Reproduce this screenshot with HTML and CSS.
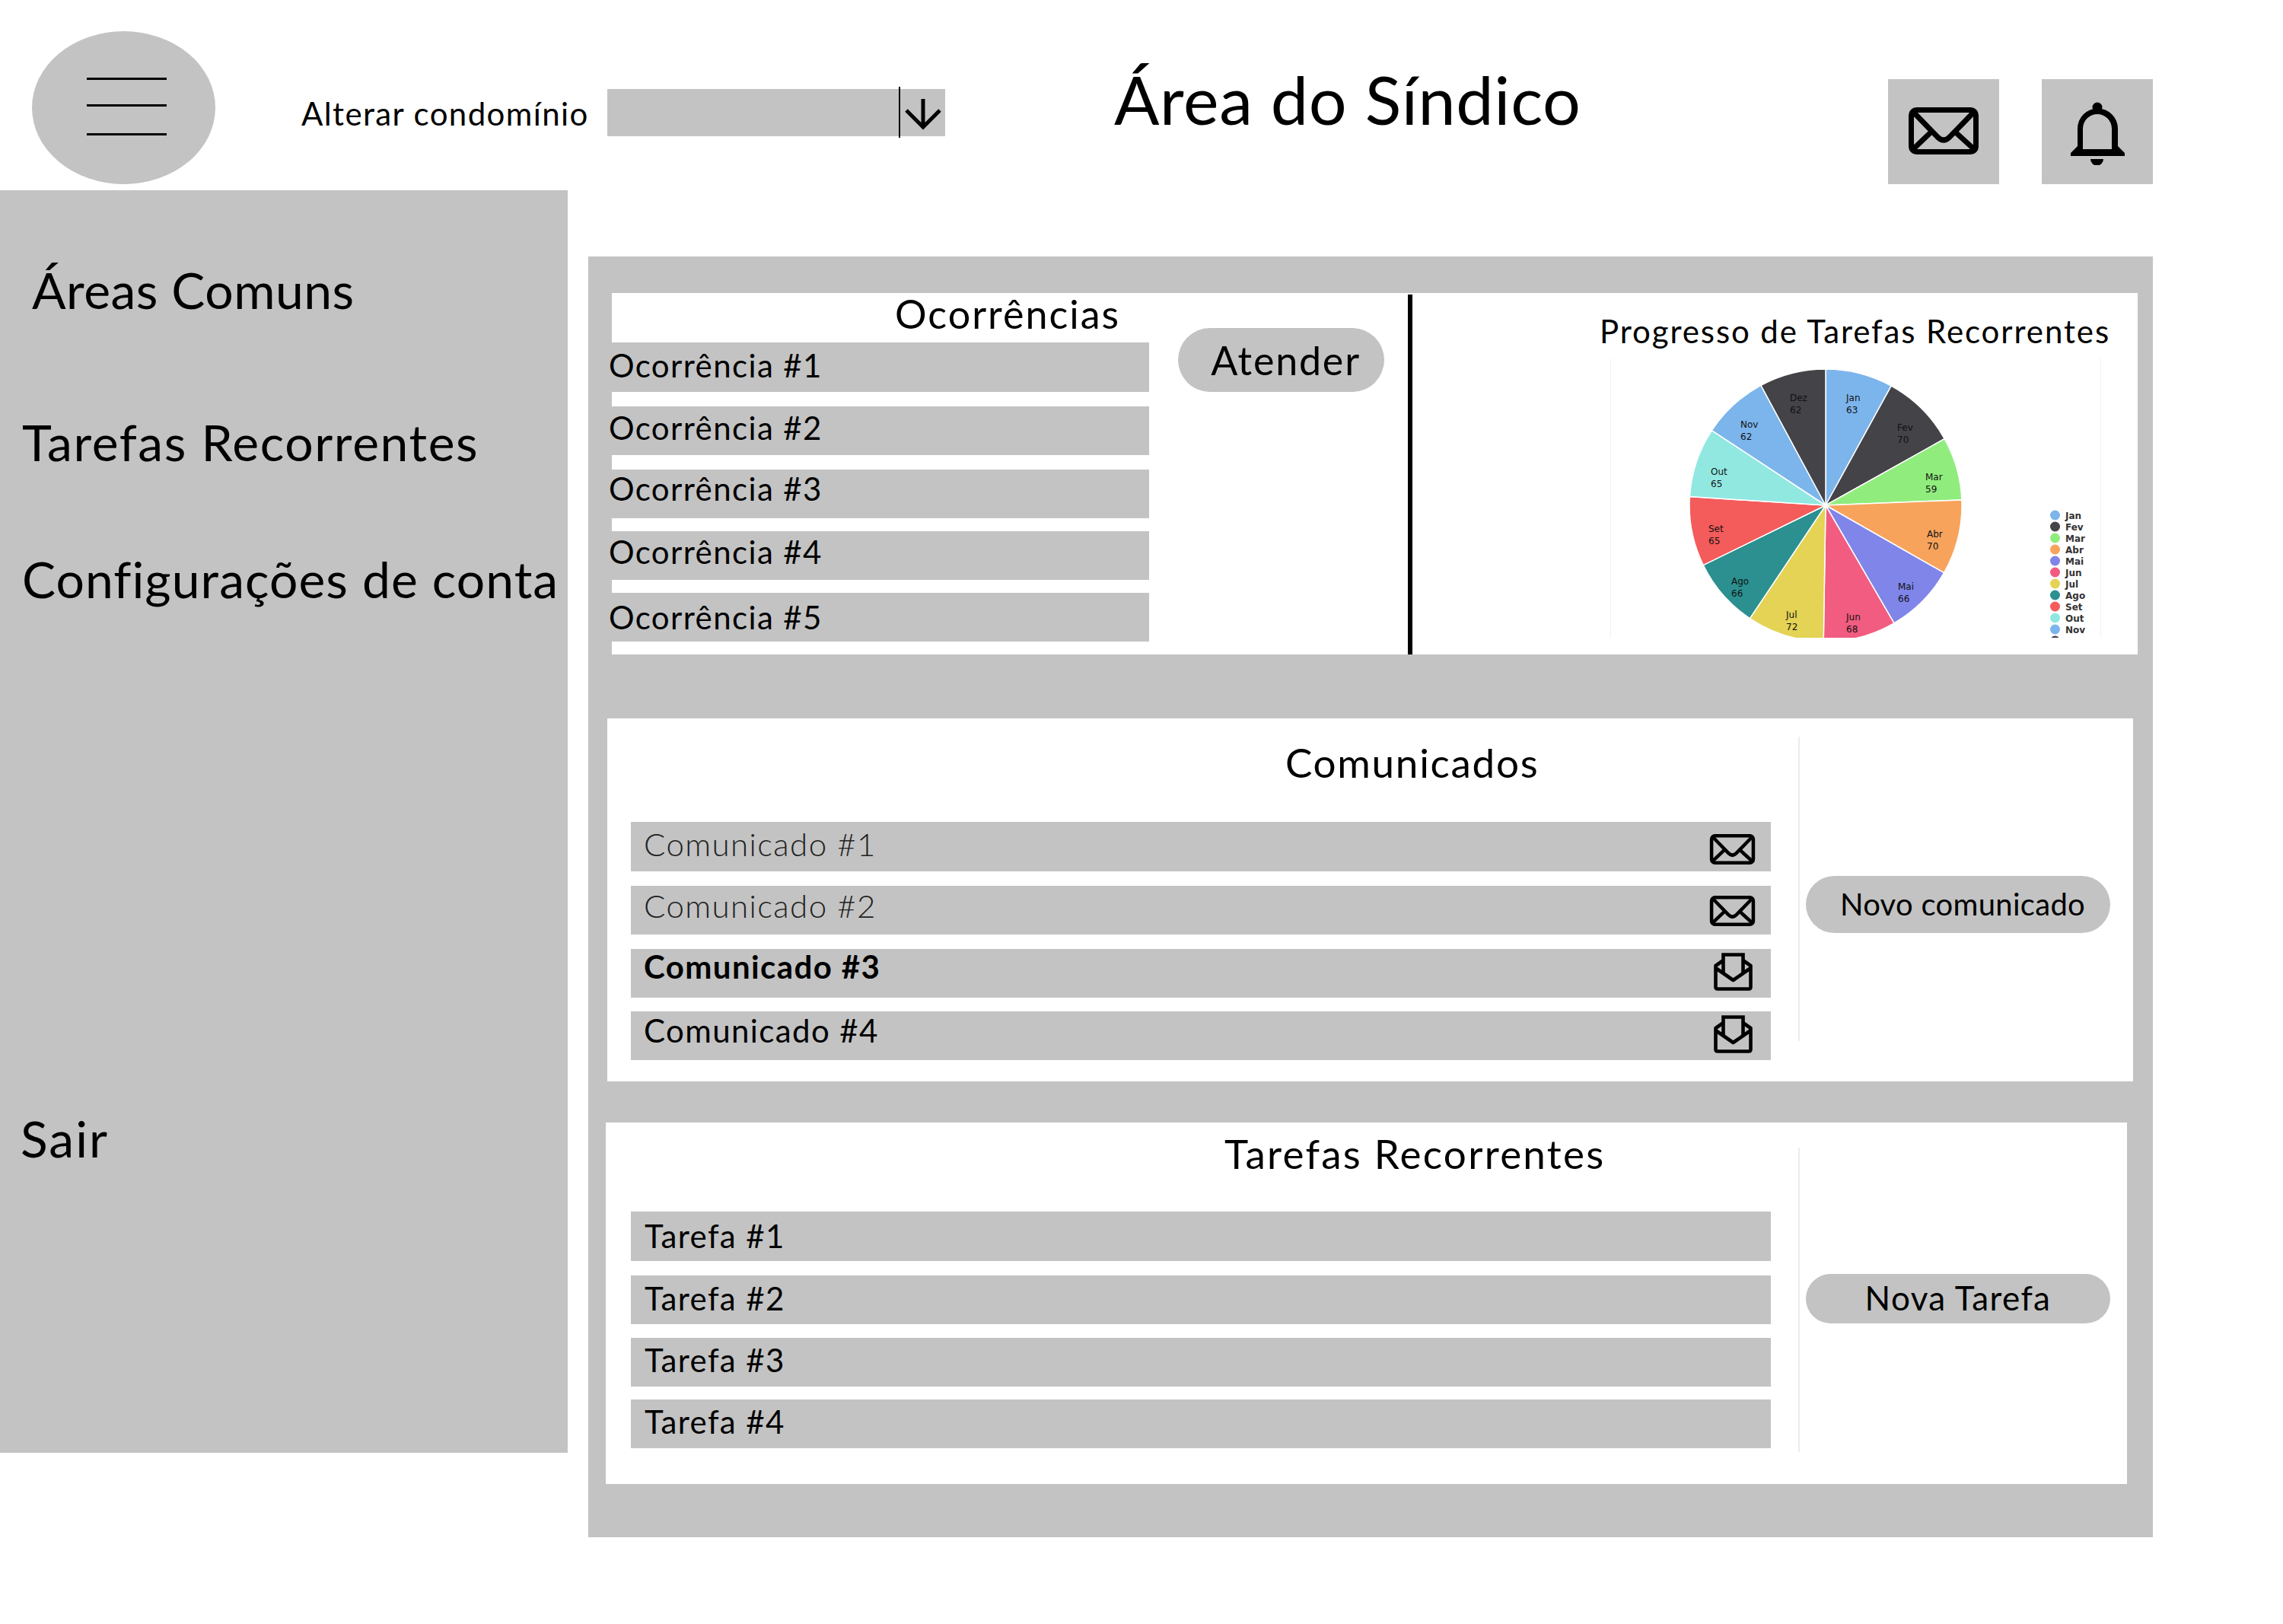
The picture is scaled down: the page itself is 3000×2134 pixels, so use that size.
FILE: index.html
```html
<!DOCTYPE html>
<html lang="pt-BR">
<head>
<meta charset="utf-8">
<title>Área do Síndico</title>
<link rel="stylesheet" href="styles.css">
</head>
<body>
<svg class="defs" width="0" height="0">
  <symbol id="mail" viewBox="0 0 92 62">
    <g fill="none" stroke="#000" stroke-width="7" stroke-linecap="round" stroke-linejoin="round">
      <rect x="3.5" y="3.5" width="85" height="55" rx="7"/>
      <path d="M7 7 L38 39 Q46 47 54 39 L85 7"/>
      <path d="M6 55 L28 34 M63 34 L86 55"/>
    </g>
  </symbol>
  <symbol id="open" viewBox="0 0 51 50">
    <g fill="none" stroke="#000" stroke-width="4.6" stroke-linejoin="round">
      <path d="M12.5 10 L2.5 17 V45 Q2.5 47.5 5 47.5 H46 Q48.5 47.5 48.5 45 V17 L38.5 10"/>
      <path d="M2.5 20 L25.5 36 L48.5 20"/>
      <path d="M12.5 28 V2.5 H38.5 V28" stroke-linejoin="miter"/>
    </g>
  </symbol>
</svg>
<div class="page">
  <header class="topbar">
    <div class="burger"><i></i><i></i><i></i></div>
    <div class="switch-label">Alterar condomínio</div>
    <div class="select">
      <span class="select-divider"></span>
      <svg class="select-arrow" viewBox="0 0 48 42"><path d="M24 1 V38 M2 16 L24 38 L46 16" fill="none" stroke="#000" stroke-width="5"/></svg>
    </div>
    <h1 class="page-title">Área do Síndico</h1>
    <div class="icon-box"><svg class="icon-mail"><use href="#mail"/></svg></div>
    <div class="icon-box icon-box-bell">
      <svg class="icon-bell" viewBox="0 0 71 84">
        <circle cx="35" cy="8" r="6.5"/>
        <path fill-rule="evenodd" d="M9 59 V36 A26.5 26.5 0 0 1 62 36 V59 L71 68 V72 H0 V68 Z M16 63 H54 V36 A19 19 0 0 0 16 36 Z"/>
        <path d="M26 76 H43 A8.5 8.5 0 0 1 26 76 Z"/>
      </svg>
    </div>
  </header>
  <div class="content">
    <nav class="sidebar">
      <a class="nav-item nav-areas">Áreas Comuns</a>
      <a class="nav-item nav-tasks">Tarefas Recorrentes</a>
      <a class="nav-item nav-config">Configurações de conta</a>
      <a class="nav-item nav-exit">Sair</a>
    </nav>
    <main class="panel">
      <section class="card card-top">
        <div class="occ">
          <div class="occ-list">
            <h2 class="occ-title">Ocorrências</h2>
            <div class="row occ-row"><span>Ocorrência #1</span></div>
            <div class="row occ-row"><span>Ocorrência #2</span></div>
            <div class="row occ-row"><span>Ocorrência #3</span></div>
            <div class="row occ-row"><span>Ocorrência #4</span></div>
            <div class="row occ-row"><span>Ocorrência #5</span></div>
          </div>
          <div class="btn btn-attend">Atender</div>
        </div>
        <div class="progress">
          <h2 class="progress-title">Progresso de Tarefas Recorrentes</h2>
          <svg class="chart" viewBox="0 0 645 367">
            <g class="chart-frame"><path d="M0.5 0 V367 M644.5 0 V367"/></g>
            <g transform="translate(283 193)" stroke="#fff" stroke-width="1.5">
              <path fill="#7cb5ec" d="M0 0 L0 -179 A179 179 0 0 1 86.2 -156.9 Z"/>
              <path fill="#434348" d="M0 0 L86.2 -156.9 A179 179 0 0 1 156.2 -87.4 Z"/>
              <path fill="#90ed7d" d="M0 0 L156.2 -87.4 A179 179 0 0 1 178.9 -7.1 Z"/>
              <path fill="#f7a35c" d="M0 0 L178.9 -7.1 A179 179 0 0 1 155.5 88.7 Z"/>
              <path fill="#8085e9" d="M0 0 L155.5 88.7 A179 179 0 0 1 89.9 154.8 Z"/>
              <path fill="#f15c80" d="M0 0 L89.9 154.8 A179 179 0 0 1 -2.8 179 Z"/>
              <path fill="#e4d354" d="M0 0 L-2.8 179 A179 179 0 0 1 -99.6 148.7 Z"/>
              <path fill="#2b908f" d="M0 0 L-99.6 148.7 A179 179 0 0 1 -160.8 78.6 Z"/>
              <path fill="#f45b5b" d="M0 0 L-160.8 78.6 A179 179 0 0 1 -178.6 -11.4 Z"/>
              <path fill="#91e8e1" d="M0 0 L-178.6 -11.4 A179 179 0 0 1 -149.6 -98.4 Z"/>
              <path fill="#7cb5ec" d="M0 0 L-149.6 -98.4 A179 179 0 0 1 -85 -157.6 Z"/>
              <path fill="#434348" d="M0 0 L-85 -157.6 A179 179 0 0 1 0 -179 Z"/>
            </g>
            <g class="slice-labels">
              <text x="310" y="56">Jan<tspan x="310" dy="16">63</tspan></text>
              <text x="377" y="95">Fev<tspan x="377" dy="16">70</tspan></text>
              <text x="414" y="160">Mar<tspan x="414" dy="16">59</tspan></text>
              <text x="416" y="235">Abr<tspan x="416" dy="16">70</tspan></text>
              <text x="378" y="304">Mai<tspan x="378" dy="16">66</tspan></text>
              <text x="310" y="344">Jun<tspan x="310" dy="16">68</tspan></text>
              <text x="231" y="341">Jul<tspan x="231" dy="16">72</tspan></text>
              <text x="159" y="297">Ago<tspan x="159" dy="16">66</tspan></text>
              <text x="129" y="228">Set<tspan x="129" dy="16">65</tspan></text>
              <text x="132" y="153">Out<tspan x="132" dy="16">65</tspan></text>
              <text x="171" y="91">Nov<tspan x="171" dy="16">62</tspan></text>
              <text x="236" y="56">Dez<tspan x="236" dy="16">62</tspan></text>
            </g>
            <g class="legend">
              <circle cx="584.5" cy="206" r="6.5" fill="#7cb5ec"/><text x="598" y="211">Jan</text>
              <circle cx="584.5" cy="221" r="6.5" fill="#434348"/><text x="598" y="226">Fev</text>
              <circle cx="584.5" cy="236" r="6.5" fill="#90ed7d"/><text x="598" y="241">Mar</text>
              <circle cx="584.5" cy="251" r="6.5" fill="#f7a35c"/><text x="598" y="256">Abr</text>
              <circle cx="584.5" cy="266" r="6.5" fill="#8085e9"/><text x="598" y="271">Mai</text>
              <circle cx="584.5" cy="281" r="6.5" fill="#f15c80"/><text x="598" y="286">Jun</text>
              <circle cx="584.5" cy="296" r="6.5" fill="#e4d354"/><text x="598" y="301">Jul</text>
              <circle cx="584.5" cy="311" r="6.5" fill="#2b908f"/><text x="598" y="316">Ago</text>
              <circle cx="584.5" cy="326" r="6.5" fill="#f45b5b"/><text x="598" y="331">Set</text>
              <circle cx="584.5" cy="341" r="6.5" fill="#91e8e1"/><text x="598" y="346">Out</text>
              <circle cx="584.5" cy="356" r="6.5" fill="#7cb5ec"/><text x="598" y="361">Nov</text>
              <circle cx="584.5" cy="371" r="6.5" fill="#434348"/><text x="598" y="376">Dez</text>
            </g>
          </svg>
        </div>
      </section>

      <section class="card card-notices">
        <div class="list-col">
          <h2 class="list-title notices-title">Comunicados</h2>
          <div class="rows notices-rows">
            <div class="row notice-row read"><span>Comunicado #1</span><svg class="row-mail"><use href="#mail"/></svg></div>
            <div class="row notice-row read"><span>Comunicado #2</span><svg class="row-mail"><use href="#mail"/></svg></div>
            <div class="row notice-row strong"><span>Comunicado #3</span><svg class="row-open"><use href="#open"/></svg></div>
            <div class="row notice-row"><span>Comunicado #4</span><svg class="row-open"><use href="#open"/></svg></div>
          </div>
        </div>
        <div class="vline"></div>
        <div class="btn btn-side btn-notice">Novo comunicado</div>
      </section>

      <section class="card card-tasks">
        <div class="list-col list-col-tasks">
          <h2 class="list-title tasks-title">Tarefas Recorrentes</h2>
          <div class="rows tasks-rows">
            <div class="row task-row"><span>Tarefa #1</span></div>
            <div class="row task-row"><span>Tarefa #2</span></div>
            <div class="row task-row"><span>Tarefa #3</span></div>
            <div class="row task-row"><span>Tarefa #4</span></div>
          </div>
        </div>
        <div class="vline"></div>
        <div class="btn btn-side btn-task">Nova Tarefa</div>
      </section>
    </main>
  </div>
</div>
</body>
</html>
```
FILE: styles.css
```css
* { box-sizing: border-box; }
html, body { margin: 0; padding: 0; background: #fff; }
body { font-family: "Lato", "Liberation Sans", sans-serif; color: #000; }
h1, h2 { margin: 0; font-weight: 400; }
.defs { position: absolute; }
.page { width: 3000px; height: 2134px; overflow: hidden; }

/* Top bar */
.topbar { display: flex; align-items: flex-start; height: 250px; }
.burger { width: 241px; height: 201px; margin: 41px 0 0 42px; padding: 61px 0 0 72px; border-radius: 50%; background: #c3c3c3; display: flex; flex-direction: column; flex: none; }
.burger i { display: block; width: 105px; height: 3px; background: #000; }
.burger i:nth-child(2) { margin-top: 32px; }
.burger i:nth-child(3) { margin-top: 35px; }
.switch-label { width: 402px; margin: 124px 0 0 113px; font-size: 42px; line-height: 50px; letter-spacing: 1.4px; white-space: nowrap; flex: none; }
.select { width: 444px; height: 62px; margin-top: 117px; background: #c3c3c3; display: flex; flex: none; padding-left: 383px; }
.select-divider { width: 2px; height: 67px; margin-top: -3px; background: #000; flex: none; }
.select-arrow { width: 48px; height: 42px; margin: 12px 0 0 6px; flex: none; }
.page-title { width: 1017px; margin: 75px 0 0 222px; font-size: 88px; line-height: 110px; letter-spacing: 0.7px; white-space: nowrap; flex: none; }
.icon-box { width: 146px; height: 138px; margin-top: 104px; background: #c3c3c3; display: flex; align-items: center; justify-content: center; flex: none; }
.icon-box-bell { margin-left: 56px; }
.icon-mail { width: 92px; height: 62px; margin-top: -2px; }
.icon-bell { width: 71px; height: 84px; margin-top: 4px; }

/* Layout */
.content { display: flex; align-items: flex-start; }
.sidebar { width: 746px; height: 1659px; background: #c3c3c3; padding-top: 93px; display: flex; flex-direction: column; align-items: flex-start; flex: none; }
.nav-item { font-size: 66px; line-height: 76px; white-space: nowrap; }
.nav-areas { margin-left: 42px; letter-spacing: 0.5px; }
.nav-tasks { margin: 124px 0 0 29px; letter-spacing: 1.6px; }
.nav-config { margin: 104px 0 0 29px; letter-spacing: 1.05px; }
.nav-exit { margin: 659px 0 0 27px; letter-spacing: 2px; }
.panel { width: 2056px; height: 1683px; margin: 87px 0 0 27px; background: #c3c3c3; padding-top: 48px; flex: none; }

/* Cards */
.card { background: #fff; display: flex; align-items: flex-start; }
.card-top { width: 2005px; height: 475px; margin-left: 31px; }
.card-notices { width: 2005px; height: 477px; margin: 84px 0 0 25px; }
.card-tasks { width: 1999px; height: 475px; margin: 54px 0 0 23px; }

/* Occurrences */
.occ { width: 1046px; display: flex; align-items: flex-start; flex: none; }
.occ-list { width: 706px; flex: none; }
.occ-title { height: 65px; padding-left: 372px; font-size: 52px; line-height: 54px; letter-spacing: 2px; white-space: nowrap; }
.row { background: #c3c3c3; display: flex; font-size: 42px; line-height: 50px; white-space: nowrap; letter-spacing: 1.4px; }
.occ-row { height: 64px; }
.occ-row span { margin-left: -4px; }
.occ-row:nth-child(2) { height: 65px; padding-top: 5px; }
.occ-row:nth-child(3) { margin-top: 19px; padding-top: 3px; }
.occ-row:nth-child(4) { margin-top: 19px; }
.occ-row:nth-child(5) { margin-top: 17px; padding-top: 2px; }
.occ-row:nth-child(6) { margin-top: 17px; padding-top: 7px; }
.btn { background: #c3c3c3; display: flex; align-items: center; justify-content: center; white-space: nowrap; flex: none; }
.btn-attend { width: 271px; height: 84px; margin: 46px 0 0 38px; padding: 0 0 0 12px; border-radius: 42px; font-size: 52px; letter-spacing: 1.8px; }

/* Progress chart */
.progress { flex: 1; height: 473px; margin-top: 2px; border-left: 6px solid #000; }
.progress-title { height: 50px; margin: 23px 0 0 246px; font-size: 42px; line-height: 50px; letter-spacing: 1.9px; white-space: nowrap; }
.chart { display: block; width: 645px; height: 367px; margin: 11px 0 0 260px; overflow: hidden; }
.chart-frame path { stroke: #f1f1f1; stroke-width: 1; fill: none; }
.slice-labels text { font-family: "DejaVu Sans", sans-serif; font-size: 12px; fill: #111; }
.legend text { font-family: "DejaVu Sans", sans-serif; font-size: 12px; font-weight: 700; fill: #333; }

/* Lists */
.list-col { width: 1565px; flex: none; }
.list-col-tasks { width: 1567px; }
.list-title { font-size: 53px; line-height: 64px; white-space: nowrap; }
.notices-title { height: 136px; padding: 26px 0 0 891px; letter-spacing: 1.7px; }
.tasks-title { height: 117px; padding: 9px 0 0 813px; letter-spacing: 2.25px; }
.rows { margin-left: 31px; width: 1498px; }
.tasks-rows { margin-left: 33px; }
.notice-row, .task-row { height: 64px; justify-content: space-between; align-items: flex-start; }
.notice-row { padding-left: 17px; }
.task-row { padding-left: 18px; }
.notice-row:first-child { height: 65px; padding-top: 4px; }
.notice-row:nth-child(2) { margin-top: 19px; padding-top: 1px; }
.notice-row:nth-child(3) { margin-top: 19px; }
.notice-row:nth-child(3) span { margin-top: -2px; }
.notice-row:nth-child(4) { margin-top: 18px; }
.read { font-weight: 300; color: #222; }
.strong { font-weight: 700; }
.row-mail { width: 61px; height: 40px; margin: 12px 20px 0 0; }
.row-open { width: 51px; height: 50px; margin: 5px 24px 0 0; }
.task-row:first-child { height: 65px; padding-top: 7px; }
.task-row:nth-child(2) { margin-top: 19px; padding-top: 5px; }
.task-row:nth-child(3) { margin-top: 18px; padding-top: 4px; }
.task-row:nth-child(4) { margin-top: 17px; padding-top: 4px; }
.vline { width: 2px; background: #ececec; flex: none; }
.card-notices .vline { height: 400px; margin-top: 24px; }
.card-tasks .vline { height: 400px; margin-top: 33px; }
.btn-side { width: 400px; height: 75px; margin-left: 8px; border-radius: 38px; }
.btn-notice { margin-top: 207px; padding: 0 0 2px 12px; font-size: 40px; letter-spacing: 0.3px; }
.btn-task { height: 65px; margin-top: 199px; padding: 0 0 4px 0; border-radius: 33px; font-size: 44px; letter-spacing: 1.4px; }
```
